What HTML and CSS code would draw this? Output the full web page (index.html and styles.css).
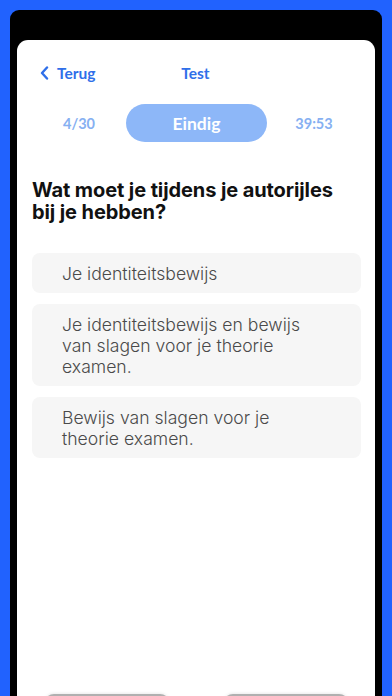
FILE: index.html
```html
<!DOCTYPE html>
<html lang="nl">
<head>
<meta charset="utf-8">
<link rel="stylesheet" href="styles.css">
</head>
<body>
<div class="frame">
  <div class="screen">
    <header class="nav">
      <a class="back">
        <svg width="9" height="14" viewBox="0 0 9 14"><path d="M7 1.5 L2 7 L7 12.5" fill="none" stroke="#2f6fe9" stroke-width="2.4" stroke-linecap="round" stroke-linejoin="round"/></svg>
        <span>Terug</span>
      </a>
      <div class="title">Test</div>
      <div class="spacer"></div>
    </header>
    <div class="status">
      <span class="count">4/30</span>
      <button class="end">Eindig</button>
      <span class="timer">39:53</span>
    </div>
    <h1 class="question">Wat moet je tijdens je autorijles bij je hebben?</h1>
    <ul class="answers">
      <li class="answer">Je identiteitsbewijs</li>
      <li class="answer">Je identiteitsbewijs en bewijs van slagen voor je theorie examen.</li>
      <li class="answer">Bewijs van slagen voor je theorie examen.</li>
    </ul>
    <div class="footer">
      <button class="foot-btn" aria-label="Vorige"></button>
      <button class="foot-btn" aria-label="Volgende"></button>
    </div>
  </div>
</div>
</body>
</html>
```
FILE: styles.css
```css
html, body {
  margin: 0;
  padding: 0;
  height: 696px;
  overflow: hidden;
}
body {
  background: #2162fe;
  font-family: "Inter", "Lato", sans-serif;
}
.frame {
  margin: 10px 10px 0;
  background: #000;
  border-radius: 9px 9px 0 0;
  padding: 30px 7px 0;
  height: 760px;
  box-sizing: border-box;
}
.screen {
  background: #fff;
  border-radius: 11px 11px 0 0;
  height: 730px;
  display: flex;
  flex-direction: column;
  padding: 0 14px 0 15px;
}
.nav {
  display: flex;
  align-items: center;
  height: 66px;
  font-family: "Lato", sans-serif;
}
.back {
  display: flex;
  align-items: center;
  gap: 8px;
  width: 80px;
  padding-left: 8px;
  color: #2f6fe9;
  font-weight: 700;
  font-size: 15.5px;
}
.title {
  flex: 1;
  text-align: center;
  color: #2f6fe9;
  font-weight: 700;
  font-size: 15.5px;
  padding-right: 2px;
}
.spacer {
  width: 88px;
}
.status {
  display: flex;
  align-items: center;
  height: 38px;
  margin-top: -2px;
  font-family: "Lato", sans-serif;
}
.count, .timer {
  flex: 0 0 94px;
  text-align: center;
  color: #86b0f2;
  font-weight: 700;
  font-size: 14.5px;
}
.end {
  flex: 0 0 141px;
  height: 38px;
  border: none;
  border-radius: 19px;
  background: #8db7f8;
  color: #fff;
  font-family: inherit;
  font-weight: 700;
  font-size: 17.5px;
}
.question {
  margin: 37px 0 0;
  font-size: 20px;
  line-height: 22px;
  font-weight: 700;
  color: #111;
  padding-right: 18px;
  letter-spacing: -0.1px;
}
.answers {
  list-style: none;
  margin: 30px 0 0;
  padding: 0;
  display: flex;
  flex-direction: column;
  gap: 11px;
}
.answer {
  background: #f6f6f6;
  border-radius: 8px;
  padding: 10px 42px 9px 30px;
  font-size: 17.6px;
  line-height: 21px;
  font-weight: 300;
  color: #4a4a4a;
}
.footer {
  margin-top: auto;
  height: 76px;
  display: flex;
  justify-content: space-between;
  padding: 0 12px;
}
.foot-btn {
  width: 126px;
  height: 44px;
  border: none;
  border-radius: 10px;
  background: #b0b0b0;
  box-shadow: 0 -1px 3px rgba(0, 0, 0, 0.08);
}
```
